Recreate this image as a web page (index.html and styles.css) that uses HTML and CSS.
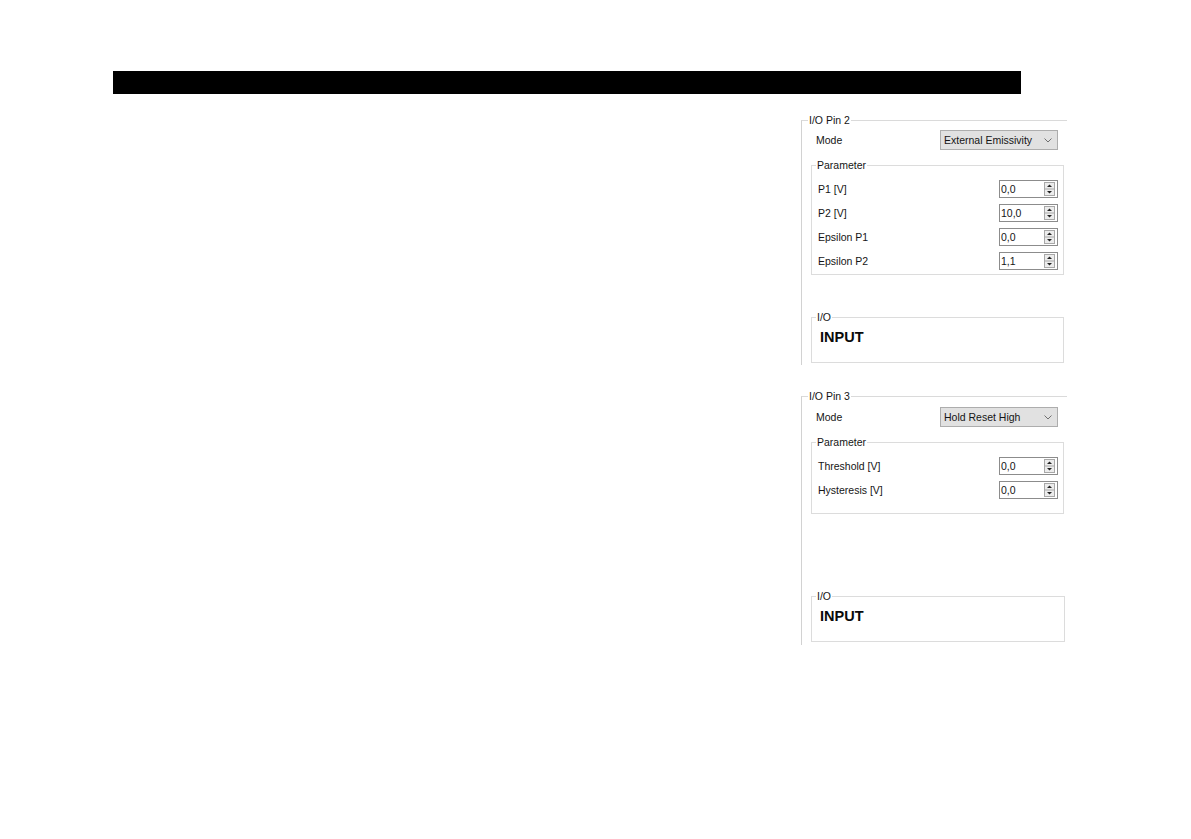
FILE: index.html
```html
<!DOCTYPE html>
<html>
<head>
<meta charset="utf-8">
<title>I/O Pins</title>
<link rel="stylesheet" href="styles.css">
</head>
<body>
<div class="page">
  <div class="bar"></div>
  <div class="panel">
    <fieldset class="group g1">
      <legend>I/O Pin 2</legend>
      <div class="mode-row m1">
        <span class="label">Mode</span>
        <div class="select"><span>External Emissivity</span><svg class="chev" width="8" height="5" viewBox="0 0 8 5"><polyline points="0.5,0.5 4,4 7.5,0.5" fill="none" stroke="#707070" stroke-width="1"/></svg></div>
      </div>
      <fieldset class="param p1">
        <legend>Parameter</legend>
        <div class="row"><span class="label">P1 [V]</span><div class="spin"><span class="val">0,0</span><svg class="btns" width="11" height="14" viewBox="0 0 11 14"><rect x="0.5" y="0.5" width="10" height="13" fill="#ececec" stroke="#a8a8a8"/><line x1="1" y1="7" x2="10" y2="7" stroke="#a8a8a8"/><polygon points="3,5 8,5 5.5,2.5" fill="#222"/><polygon points="3,9 8,9 5.5,11.5" fill="#222"/></svg></div></div>
        <div class="row"><span class="label">P2 [V]</span><div class="spin"><span class="val">10,0</span><svg class="btns" width="11" height="14" viewBox="0 0 11 14"><rect x="0.5" y="0.5" width="10" height="13" fill="#ececec" stroke="#a8a8a8"/><line x1="1" y1="7" x2="10" y2="7" stroke="#a8a8a8"/><polygon points="3,5 8,5 5.5,2.5" fill="#222"/><polygon points="3,9 8,9 5.5,11.5" fill="#222"/></svg></div></div>
        <div class="row"><span class="label">Epsilon P1</span><div class="spin"><span class="val">0,0</span><svg class="btns" width="11" height="14" viewBox="0 0 11 14"><rect x="0.5" y="0.5" width="10" height="13" fill="#ececec" stroke="#a8a8a8"/><line x1="1" y1="7" x2="10" y2="7" stroke="#a8a8a8"/><polygon points="3,5 8,5 5.5,2.5" fill="#222"/><polygon points="3,9 8,9 5.5,11.5" fill="#222"/></svg></div></div>
        <div class="row"><span class="label">Epsilon P2</span><div class="spin"><span class="val">1,1</span><svg class="btns" width="11" height="14" viewBox="0 0 11 14"><rect x="0.5" y="0.5" width="10" height="13" fill="#ececec" stroke="#a8a8a8"/><line x1="1" y1="7" x2="10" y2="7" stroke="#a8a8a8"/><polygon points="3,5 8,5 5.5,2.5" fill="#222"/><polygon points="3,9 8,9 5.5,11.5" fill="#222"/></svg></div></div>
      </fieldset>
      <fieldset class="io io1">
        <legend>I/O</legend>
        <div class="io-val">INPUT</div>
      </fieldset>
    </fieldset>

    <fieldset class="group g2">
      <legend>I/O Pin 3</legend>
      <div class="mode-row m2">
        <span class="label">Mode</span>
        <div class="select"><span>Hold Reset High</span><svg class="chev" width="8" height="5" viewBox="0 0 8 5"><polyline points="0.5,0.5 4,4 7.5,0.5" fill="none" stroke="#707070" stroke-width="1"/></svg></div>
      </div>
      <fieldset class="param p2">
        <legend>Parameter</legend>
        <div class="row"><span class="label">Threshold [V]</span><div class="spin"><span class="val">0,0</span><svg class="btns" width="11" height="14" viewBox="0 0 11 14"><rect x="0.5" y="0.5" width="10" height="13" fill="#ececec" stroke="#a8a8a8"/><line x1="1" y1="7" x2="10" y2="7" stroke="#a8a8a8"/><polygon points="3,5 8,5 5.5,2.5" fill="#222"/><polygon points="3,9 8,9 5.5,11.5" fill="#222"/></svg></div></div>
        <div class="row"><span class="label">Hysteresis [V]</span><div class="spin"><span class="val">0,0</span><svg class="btns" width="11" height="14" viewBox="0 0 11 14"><rect x="0.5" y="0.5" width="10" height="13" fill="#ececec" stroke="#a8a8a8"/><line x1="1" y1="7" x2="10" y2="7" stroke="#a8a8a8"/><polygon points="3,5 8,5 5.5,2.5" fill="#222"/><polygon points="3,9 8,9 5.5,11.5" fill="#222"/></svg></div></div>
      </fieldset>
      <fieldset class="io io2">
        <legend>I/O</legend>
        <div class="io-val">INPUT</div>
      </fieldset>
    </fieldset>
  </div>
</div>
</body>
</html>
```

FILE: styles.css
```css
html, body {
  margin: 0;
  padding: 0;
  background: #ffffff;
}
body {
  font-family: "Liberation Sans", Arial, sans-serif;
  font-size: 10.5px;
  color: #151515;
}
.page {
  padding-top: 71px;
}
.bar {
  margin-left: 113px;
  width: 908px;
  height: 23px;
  background: #000000;
}
.panel {
  margin-left: 801px;
  width: 266px;
  margin-top: 20px;
}
fieldset {
  margin: 0;
  padding: 0;
  min-width: 0;
  box-sizing: border-box;
}
legend {
  padding: 0 1px;
  height: 12px;
  line-height: 12px;
  font-size: 10.5px;
}
.group {
  width: 266px;
  border: none;
  border-top: 1px solid #dadada;
  border-left: 1px solid #d2d2d2;
}
.group > legend {
  margin-left: 6px;
}
.g1 {
  padding-bottom: 2px;
}
.g2 {
  margin-top: 25px;
  padding-bottom: 3px;
}
.mode-row {
  display: flex;
  align-items: center;
  height: 20px;
  padding: 0 9px 0 14px;
}
.m1 { margin-top: 4px; }
.m2 { margin-top: 5px; }
.select {
  margin-left: auto;
  width: 118px;
  height: 20px;
  box-sizing: border-box;
  background: #e1e1e1;
  border: 1px solid #adadad;
  display: flex;
  align-items: center;
  padding: 0 5px 0 3px;
}
.select span {
  flex: 1;
  white-space: nowrap;
}
.chev {
  display: block;
}
.param {
  margin: 9px 0 0 9px;
  width: 253px;
  border: 1px solid #dcdcdc;
  padding: 9px 5px 4px 6px;
  display: flex;
  flex-direction: column;
  gap: 6px;
}
.param > legend {
  margin-left: -2px;
}
.p2 {
  padding-bottom: 14px;
}
.row {
  display: flex;
  align-items: center;
  height: 18px;
}
.spin {
  margin-left: auto;
  width: 59px;
  height: 18px;
  box-sizing: border-box;
  border: 1px solid #8c8c8c;
  background: #ffffff;
  display: flex;
  align-items: center;
  padding: 0 2px 0 1px;
}
.spin .val {
  flex: 1;
}
.btns {
  display: block;
}
.io {
  margin-left: 9px;
  border: 1px solid #dcdcdc;
  padding: 6px 0 16px 8px;
}
.io > legend {
  margin-left: -4px;
}
.io1 {
  margin-top: 36px;
  width: 253px;
}
.io2 {
  margin-top: 76px;
  width: 254px;
}
.io-val {
  font-weight: bold;
  font-size: 14.5px;
  line-height: 17px;
  color: #0a0a0a;
}
```
